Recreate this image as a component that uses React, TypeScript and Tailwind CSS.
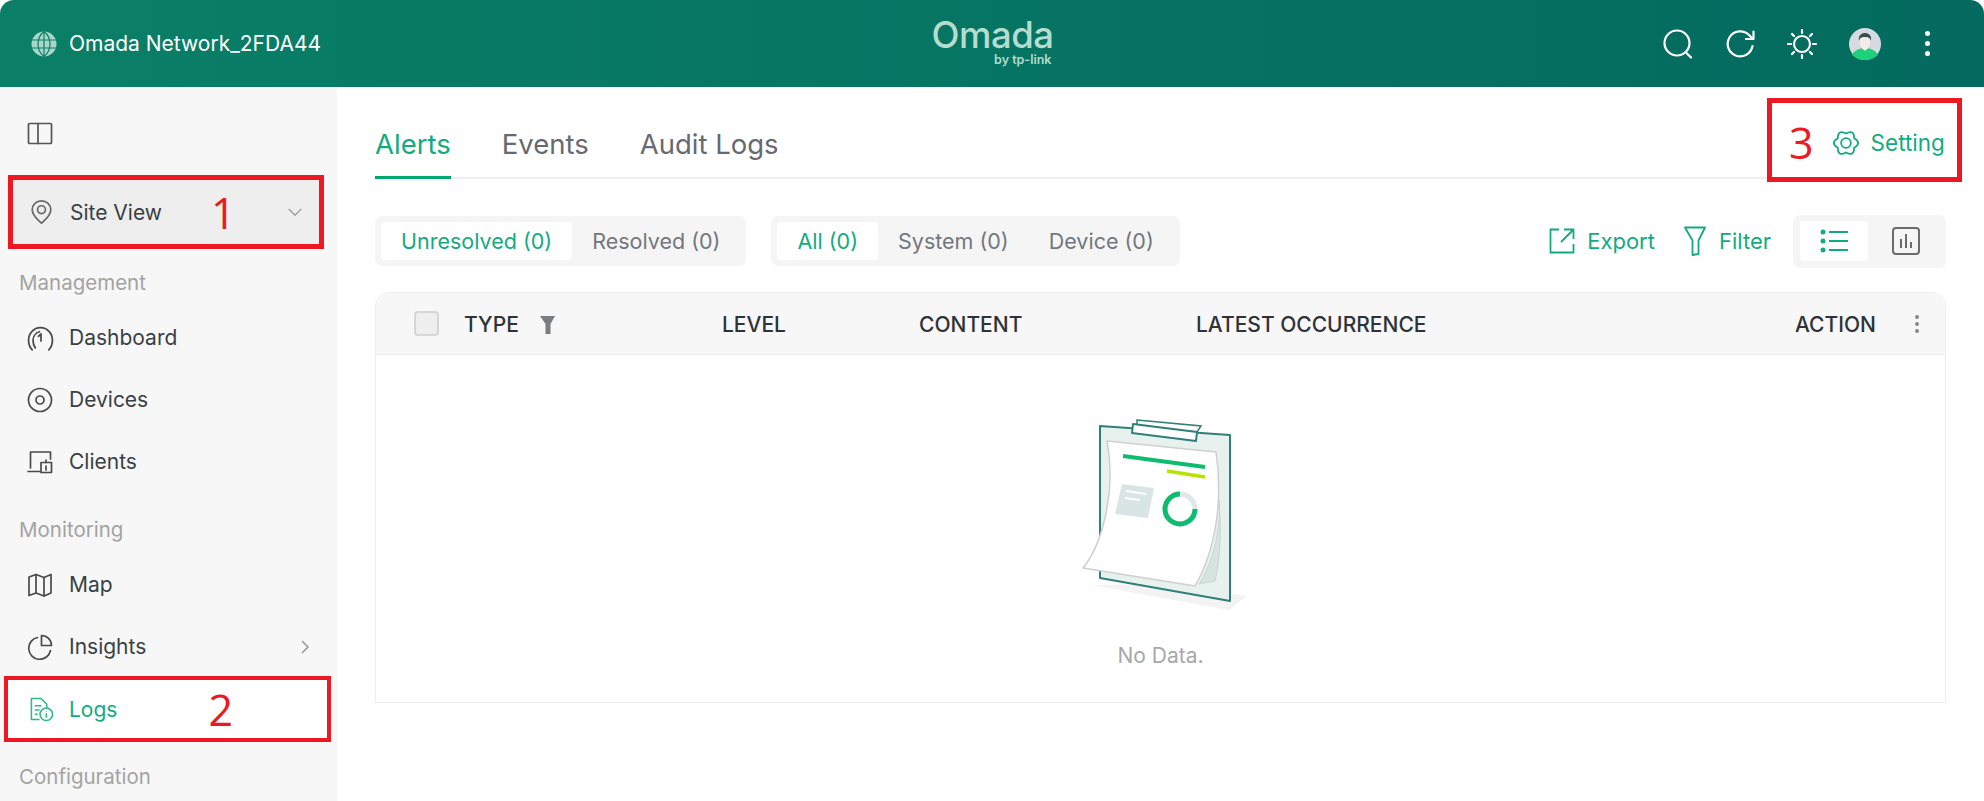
import type { ReactNode } from 'react'

const font = "font-['Inter','Noto_Sans',sans-serif]"

function Icon({ children, className = 'w-[26px] h-[26px]' }: { children: ReactNode; className?: string }) {
  return (
    <svg viewBox="0 0 26 26" fill="none" stroke="currentColor" strokeWidth="1.7" strokeLinecap="round" strokeLinejoin="round" className={`shrink-0 ${className}`}>
      {children}
    </svg>
  )
}

const gear = 'M13 4.200Q5.500 0 5.380 8.600Q-2 13 5.380 17.400Q5.500 26 13 21.800Q20.500 26 20.620 17.400Q28 13 20.620 8.600Q20.500 0 13 4.200Z'

function NavItem({ label, icon, arrow }: { label: string; icon: ReactNode; arrow?: boolean }) {
  return (
    <div className="h-[62px] flex items-center pl-[27px] pr-[26px] text-[21px] text-[#3a3f45]">
      <span className="w-[27px] text-[#4a4a4a]">{icon}</span>
      <span className="ml-[15px]">{label}</span>
      {arrow && (
        <svg viewBox="0 0 12 16" fill="none" stroke="#9a9a9a" strokeWidth="1.600" className="ml-auto w-[12px] h-[16px]">
          <path d="M3 2l6 6-6 6" />
        </svg>
      )}
    </div>
  )
}

function Label({ text, className }: { text: string; className: string }) {
  return <div className={`${className} flex items-end pl-[19px] text-[20.500px] leading-[24px] text-[#a3a3a3]`}>{text}</div>
}

function Sidebar() {
  return (
    <aside className="w-[337px] shrink-0 bg-[#f7f7f7] overflow-hidden">
      <div className="h-[88px] flex items-center pl-[27px] pt-[5px] text-[#555]">
        <Icon>
          <rect x="1.500" y="2.500" width="23" height="20" rx="1" />
          <path d="M11 2.500v20" />
        </Icon>
      </div>
      <div className="ml-[8px] w-[316px] h-[74px] border-[5px] border-[#ee1822] bg-[#eeeeee] flex items-center pl-[17px] pr-[16px] text-[21px] text-[#3a3f45]">
        <svg viewBox="0 0 24 28" fill="none" stroke="#666" strokeWidth="1.800" className="w-[23px] h-[26px] shrink-0">
          <path d="M12 26c-3-3-10-8-10-14.500C2 6 6.500 2 12 2s10 4 10 9.500C22 18 15 23 12 26z" strokeLinejoin="round" />
          <circle cx="12" cy="11.500" r="4.200" />
        </svg>
        <span className="ml-[17px] pt-[2px]">Site View</span>
        <span className="ml-[49px] text-[43px] leading-none text-[#ee1822] font-['Open_Sans',sans-serif]">1</span>
        <svg viewBox="0 0 18 10" fill="none" stroke="#a0a0a0" strokeWidth="1.600" className="ml-auto w-[16px] h-[9px]">
          <path d="M2 1l7 7 7-7" />
        </svg>
      </div>
      <Label text="Management" className="h-[58px] pb-[12px]" />
      <NavItem
        label="Dashboard"
        icon={
          <Icon className="w-[27px] h-[27px]">
            <path d="M5 24C2.500 21.500 1.500 18 1.500 14.500 1.500 8 6.500 2.500 13 2.500s11.500 5.500 11.500 12c0 3.500-1 7-3.500 9.500" />
            <path d="M8 22c-1.500-2-2.200-4.500-2.200-7C5.800 11 8.500 7.500 12 6.500" />
            <path d="M13.500 8.500L11 11M13.500 8.500v7" />
          </Icon>
        }
      />
      <NavItem
        label="Devices"
        icon={
          <Icon>
            <circle cx="13" cy="13" r="11.500" />
            <circle cx="13" cy="13" r="4" />
          </Icon>
        }
      />
      <NavItem
        label="Clients"
        icon={
          <Icon>
            <path d="M3.500 19V3h20v7M1 22.500h12" />
            <rect x="14" y="13.500" width="10.500" height="10" />
            <path d="M19 11v2.500M19 17v4" />
          </Icon>
        }
      />
      <Label text="Monitoring" className="h-[61px] pb-[12px]" />
      <NavItem
        label="Map"
        icon={
          <Icon>
            <path d="M2 5l7-2.500 8 3 7-3v18.500l-7 3-8-3-7 2.500z" />
            <path d="M9 2.500V21M17 5.500V24" />
          </Icon>
        }
      />
      <NavItem
        label="Insights"
        arrow
        icon={
          <Icon>
            <path d="M10.500 3.500a11 11 0 1 0 13 13" />
            <path d="M14.500 1.500c5.500 0 10 4.500 10 10h-10z" />
          </Icon>
        }
      />
      <div className="ml-[4px] -mt-[2px] w-[327px] h-[66px] border-[4px] border-[#ee1822] bg-white flex items-center pl-[21px] text-[21px] text-[#12ab7f]">
        <svg viewBox="0 0 26 26" fill="none" stroke="#2dbb85" strokeWidth="1.600" className="w-[25px] h-[25px] shrink-0">
          <path d="M11 23.500H2.500v-22h10l6 6v4" strokeLinejoin="round" />
          <path d="M6 9h7M6 13.500h5M6 18h3" />
          <circle cx="18" cy="18" r="6.500" />
          <path d="M18 17v4.500M18 14.500v.5" />
        </svg>
        <span className="ml-[15px] pt-[2px]">Logs</span>
        <span className="ml-[91px] text-[43px] leading-none text-[#ee1822] font-['Open_Sans',sans-serif]">2</span>
      </div>
      <Label text="Configuration" className="h-[58px] pb-[11px]" />
    </aside>
  )
}

function Segment({ items, active }: { items: string[]; active: string }) {
  return (
    <div className="h-[50px] rounded-[7px] bg-[#f5f5f5] flex items-center px-[6px] text-[21.500px] text-[#73777d]">
      {items.map(item => (
        <div
          key={item}
          className={`h-[38px] flex items-center rounded-[4px] px-[20px] ${item === active ? 'bg-white text-[#12ab7f]' : ''}`}
        >
          {item}
        </div>
      ))}
    </div>
  )
}

function Clipboard() {
  return (
    <svg viewBox="0 0 220 220" className="w-[220px] h-[220px]">
      <polygon points="40,185 178,210 196,196 120,184" fill="#f2f3f2" />
      <polygon points="49,26 179,35 179,201 49,178" fill="#e7f2ef" stroke="#2f7f7a" strokeWidth="2" strokeLinejoin="round" />
      <path d="M86 20l64 6-4 6-60-6z" fill="#fff" stroke="#2f7f7a" strokeWidth="1.500" />
      <polygon points="82,24 146,32 145,41 81,33" fill="#fff" stroke="#2f7f7a" strokeWidth="2" strokeLinejoin="round" />
      <path d="M168 100c2 30-6 62-20 84l16-3c6-25 6-55 4-81z" fill="#d4e5df" stroke="#c9d5d0" />
      <path d="M56 41l109 11c6 40 3 92-21 134L32 168c18-22 34-75 24-127z" fill="#fff" stroke="#cfcfcf" strokeWidth="1.500" strokeLinejoin="round" />
      <line x1="72" y1="56" x2="154" y2="67" stroke="#0dbd6f" strokeWidth="4" />
      <line x1="116" y1="71" x2="154" y2="77" stroke="#b7e300" strokeWidth="3.500" />
      <polygon points="71,84 103,88 97,118 64,114" fill="#d9e4e5" />
      <path d="M75 91l20 3M74 98l15 2" stroke="#fff" strokeWidth="2" />
      <circle cx="129" cy="109" r="15" fill="none" stroke="#dfe8e6" strokeWidth="5" />
      <path d="M129 94a15 15 0 1 0 15 15" fill="none" stroke="#0dbd6f" strokeWidth="5" />
    </svg>
  )
}

export default function App() {
  return (
    <div className={`${font} w-[1984px] h-[801px] overflow-hidden bg-white flex flex-col`}>
      <header className="h-[87px] shrink-0 rounded-t-[14px] bg-gradient-to-r from-[#0a7f66] to-[#046a5f] grid grid-cols-[1fr_auto_1fr] items-center pl-[31px] pr-[54px] text-white">
        <div className="flex items-center">
          <svg viewBox="0 0 26 26" fill="none" className="w-[26px] h-[26px]">
            <circle cx="13" cy="13" r="12.500" fill="#a9d6c8" />
            <path d="M13 .5c-8 6-8 19 0 25M13 .5c8 6 8 19 0 25M1 9h24M1 17h24M13 .5v25" stroke="#0a7f66" strokeWidth="1.200" />
          </svg>
          <span className="ml-[12px] text-[21px]">Omada Network_2FDA44</span>
        </div>
        <div className="w-[122px] translate-x-[12px] flex flex-col items-end text-[#b4dccf]">
          <span className="text-[36.500px] leading-[30px] font-medium tracking-[-0.5px]">Omada</span>
          <span className="text-[12.500px] leading-[14px] font-semibold mr-[2px] mt-[3px]">by tp-link</span>
        </div>
        <div className="flex items-center justify-end">
          <svg viewBox="0 0 30 30" fill="none" stroke="#fff" strokeWidth="2.200" strokeLinecap="round" className="w-[30px] h-[30px]">
            <circle cx="14" cy="14" r="12.500" />
            <path d="M23.500 24l4.500 4.500" />
          </svg>
          <svg viewBox="0 0 30 30" fill="none" stroke="#fff" strokeWidth="2.200" strokeLinecap="round" strokeLinejoin="round" className="ml-[33px] w-[30px] h-[30px]">
            <path d="M26.500 17a12.500 12.500 0 1 1-3.500-11L27 10" />
            <path d="M27.500 2.500V10H20" />
          </svg>
          <svg viewBox="0 0 32 32" fill="none" stroke="#fff" strokeWidth="2.200" strokeLinecap="round" className="ml-[30px] w-[32px] h-[32px]">
            <circle cx="16" cy="16" r="8" />
            <path d="M16 2v3M16 27v3M2 16h3M27 16h3M6 6l2 2M24 24l2 2M6 26l2-2M24 8l2-2" />
          </svg>
          <svg viewBox="0 0 32 32" className="ml-[31px] w-[32px] h-[32px]">
            <circle cx="16" cy="16" r="16" fill="#d5dbe0" />
            <path d="M3 27c2-5 8-6 10-7l3 3 3-3c2 1 8 2 10 7-3 3-8 5-13 5s-10-2-13-5z" fill="#1fd07a" />
            <path d="M10.500 12c0-4 2.500-6 5.500-6s5.500 2 5.500 6c0 5-2.500 10-5.500 10s-5.500-5-5.500-10z" fill="#f4ece6" />
            <path d="M10 13c-1-6 3-8 6-8s7 2 6 8c-1-3-2-4-6-4s-5 1-6 4z" fill="#3d4a52" />
          </svg>
          <div className="ml-[44px] flex flex-col gap-[5px]">
            <span className="w-[5px] h-[5px] rounded-full bg-white" />
            <span className="w-[5px] h-[5px] rounded-full bg-white" />
            <span className="w-[5px] h-[5px] rounded-full bg-white" />
          </div>
        </div>
      </header>

      <div className="flex-1 flex min-h-0">
        <Sidebar />
        <main className="flex-1 pl-[38px] pr-[38px]">
          {/* Tabs + setting */}
          <div className="h-[92px] border-b-2 border-[#eeeeee] flex items-end text-[27.500px] text-[#666a70]">
            <div className="h-full flex items-center pt-[25px] border-b-[3px] border-[#00a870] -mb-[2px] text-[#12ab7f]">Alerts</div>
            <div className="h-full flex items-center pt-[25px] ml-[51px]">Events</div>
            <div className="h-full flex items-center pt-[25px] ml-[51px]">Audit Logs</div>
            <div className="ml-auto -mr-[16px] -mb-[5px] w-[195px] h-[84px] border-[5px] border-[#ee1822] bg-white flex items-center pl-[17px] pt-[5px] text-[22.500px] text-[#12ab7f]">
              <span className="text-[43px] leading-none text-[#ee1822] font-['Open_Sans',sans-serif]">3</span>
              <svg viewBox="0 0 26 26" fill="none" stroke="#12ab7f" strokeWidth="1.700" className="ml-[18px] w-[28px] h-[28px] shrink-0">
                <path d={gear} strokeLinejoin="round" />
                <circle cx="13" cy="13" r="4.500" />
              </svg>
              <span className="ml-[11px]">Setting</span>
            </div>
          </div>

          {/* Filter row */}
          <div className="mt-[35px] h-[54px] flex items-center">
            <Segment items={['Unresolved (0)', 'Resolved (0)']} active="Unresolved (0)" />
            <div className="ml-[25px]">
              <Segment items={['All (0)', 'System (0)', 'Device (0)']} active="All (0)" />
            </div>
            <div className="ml-auto flex items-center text-[22px] text-[#12ab7f]">
              <svg viewBox="0 0 26 26" fill="none" stroke="#12ab7f" strokeWidth="1.800" className="w-[26px] h-[26px]">
                <path d="M10 1.500H1.500v23h23V16M15 1.500h9.500V11M24.500 1.500L12 14" />
              </svg>
              <span className="ml-[12px]">Export</span>
              <svg viewBox="0 0 22 30" fill="none" stroke="#12ab7f" strokeWidth="1.800" strokeLinejoin="round" className="ml-[29px] w-[22px] h-[30px]">
                <path d="M1 1.500h20l-6.500 13v13.500l-6 1V14.500z" />
              </svg>
              <span className="ml-[13px]">Filter</span>
              <div className="ml-[22px] w-[153px] h-[53px] rounded-[7px] bg-[#f5f5f5] flex items-center pl-[7px]">
                <div className="w-[68px] h-[40px] rounded-[4px] bg-white flex items-center justify-center">
                  <svg viewBox="0 0 28 24" fill="none" stroke="#12ab7f" strokeWidth="2.200" className="w-[28px] h-[24px]">
                    <path d="M9 3h19M9 12h19M9 21h19" />
                    <circle cx="3" cy="3" r="2.500" fill="#12ab7f" stroke="none" />
                    <circle cx="3" cy="12" r="2.500" fill="#12ab7f" stroke="none" />
                    <circle cx="3" cy="21" r="2.500" fill="#12ab7f" stroke="none" />
                  </svg>
                </div>
                <svg viewBox="0 0 28 28" fill="none" stroke="#6b6b6b" strokeWidth="2" className="ml-[24px] w-[28px] h-[28px]">
                  <rect x="1" y="1" width="26" height="26" rx="3" />
                  <path d="M9 12v9M14 7v14M19 15v6" />
                </svg>
              </div>
            </div>
          </div>

          {/* Table */}
          <div className="mt-[24px] h-[411px] rounded-t-[14px] border border-[#eeeeee] flex flex-col">
            <div className="h-[62px] shrink-0 rounded-t-[14px] bg-[#f7f7f7] border-b border-[#eeeeee] flex items-center pl-[38px] text-[21px] font-medium text-[#2f3338]">
              <span className="w-[25px] h-[25px] rounded-[4px] border-2 border-[#d6d6d6] bg-[#eeeeee]" />
              <div className="ml-[25px] w-[258px] flex items-center pt-[2px]">
                TYPE
                <svg viewBox="0 0 15 20" className="ml-[21px] w-[15px] h-[20px]">
                  <path d="M0 1h15l-4.500 8v10l-5 0V9z" fill="#7a7d80" />
                </svg>
              </div>
              <div className="w-[197px] pt-[2px]">LEVEL</div>
              <div className="w-[277px] pt-[2px]">CONTENT</div>
              <div className="flex-1 pt-[2px]">LATEST OCCURRENCE</div>
              <div className="w-[120px] pt-[2px]">ACTION</div>
              <div className="w-[30px] flex flex-col gap-[3px]">
                <span className="w-[4px] h-[4px] rounded-full bg-[#8a8a8a]" />
                <span className="w-[4px] h-[4px] rounded-full bg-[#8a8a8a]" />
                <span className="w-[4px] h-[4px] rounded-full bg-[#8a8a8a]" />
              </div>
            </div>
            <div className="flex-1 flex flex-col items-center pt-[45px]">
              <Clipboard />
              <span className="mt-[20px] text-[21px] text-[#a8a8a8]">No Data.</span>
            </div>
          </div>
        </main>
      </div>
    </div>
  )
}
